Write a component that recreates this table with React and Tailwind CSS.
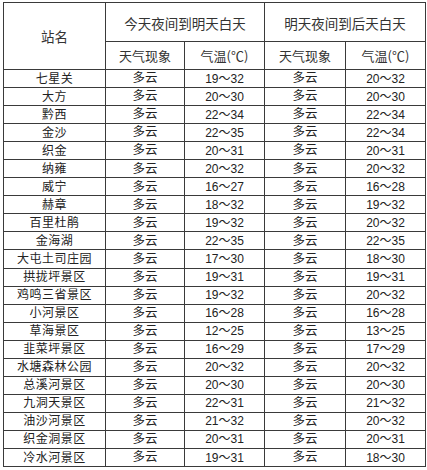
const rows = [
  ["七星关", "19～32", "20～32"],
  ["大方", "20～30", "20～30"],
  ["黔西", "22～34", "22～34"],
  ["金沙", "22～35", "22～34"],
  ["织金", "20～31", "20～31"],
  ["纳雍", "20～32", "20～32"],
  ["威宁", "16～27", "16～28"],
  ["赫章", "18～32", "19～32"],
  ["百里杜鹃", "19～32", "20～32"],
  ["金海湖", "22～35", "22～35"],
  ["大屯土司庄园", "17～30", "18～30"],
  ["拱拢坪景区", "19～31", "19～31"],
  ["鸡鸣三省景区", "19～32", "20～32"],
  ["小河景区", "16～28", "16～28"],
  ["草海景区", "12～25", "13～25"],
  ["韭菜坪景区", "16～29", "17～29"],
  ["水塘森林公园", "20～32", "20～32"],
  ["总溪河景区", "20～30", "20～30"],
  ["九洞天景区", "22～31", "21～32"],
  ["油沙河景区", "21～32", "20～32"],
  ["织金洞景区", "20～31", "20～31"],
  ["冷水河景区", "19～31", "18～30"],
];

const cell = "border border-[#3a3a3a] text-center p-0";

export default function App() {
  return (
    <div className="w-[427px] h-[470px] bg-white pt-[2px] pl-[3px]">
      <table
        className="table-fixed border-collapse w-[422px] text-[#222]"
        style={{ fontFamily: '"Liberation Sans", "Noto Sans CJK SC", sans-serif' }}
      >
        <colgroup>
          <col className="w-[102px]" />
          <col className="w-[79px]" />
          <col className="w-[80px]" />
          <col className="w-[81px]" />
          <col className="w-[80px]" />
        </colgroup>
        <thead className="text-[#333] font-['Noto_Sans_CJK_SC',sans-serif]">
          <tr className="h-[39px]">
            <th rowSpan={2} className={cell + " font-normal text-[13.5px]"}>站名</th>
            <th colSpan={2} className={cell + " font-normal text-[13.5px] pt-[3px]"}>今天夜间到明天白天</th>
            <th colSpan={2} className={cell + " font-normal text-[13.5px] pt-[3px]"}>明天夜间到后天白天</th>
          </tr>
          <tr className="h-[28px]">
            <th className={cell + " font-normal text-[13px]"}>天气现象</th>
            <th className={cell + " font-normal text-[13px]"}>气温(℃)</th>
            <th className={cell + " font-normal text-[13px]"}>天气现象</th>
            <th className={cell + " font-normal text-[13px]"}>气温(℃)</th>
          </tr>
        </thead>
        <tbody className="text-[12px] leading-none">
          {rows.map((r) => (
            <tr key={r[0]} className="h-[18.05px]">
              <td className={cell + " tracking-[0.5px]"}>{r[0]}</td>
              <td className={cell + " text-[12.5px]"}>多云</td>
              <td className={cell}>{r[1]}</td>
              <td className={cell + " text-[12.5px]"}>多云</td>
              <td className={cell}>{r[2]}</td>
            </tr>
          ))}
        </tbody>
      </table>
    </div>
  );
}
